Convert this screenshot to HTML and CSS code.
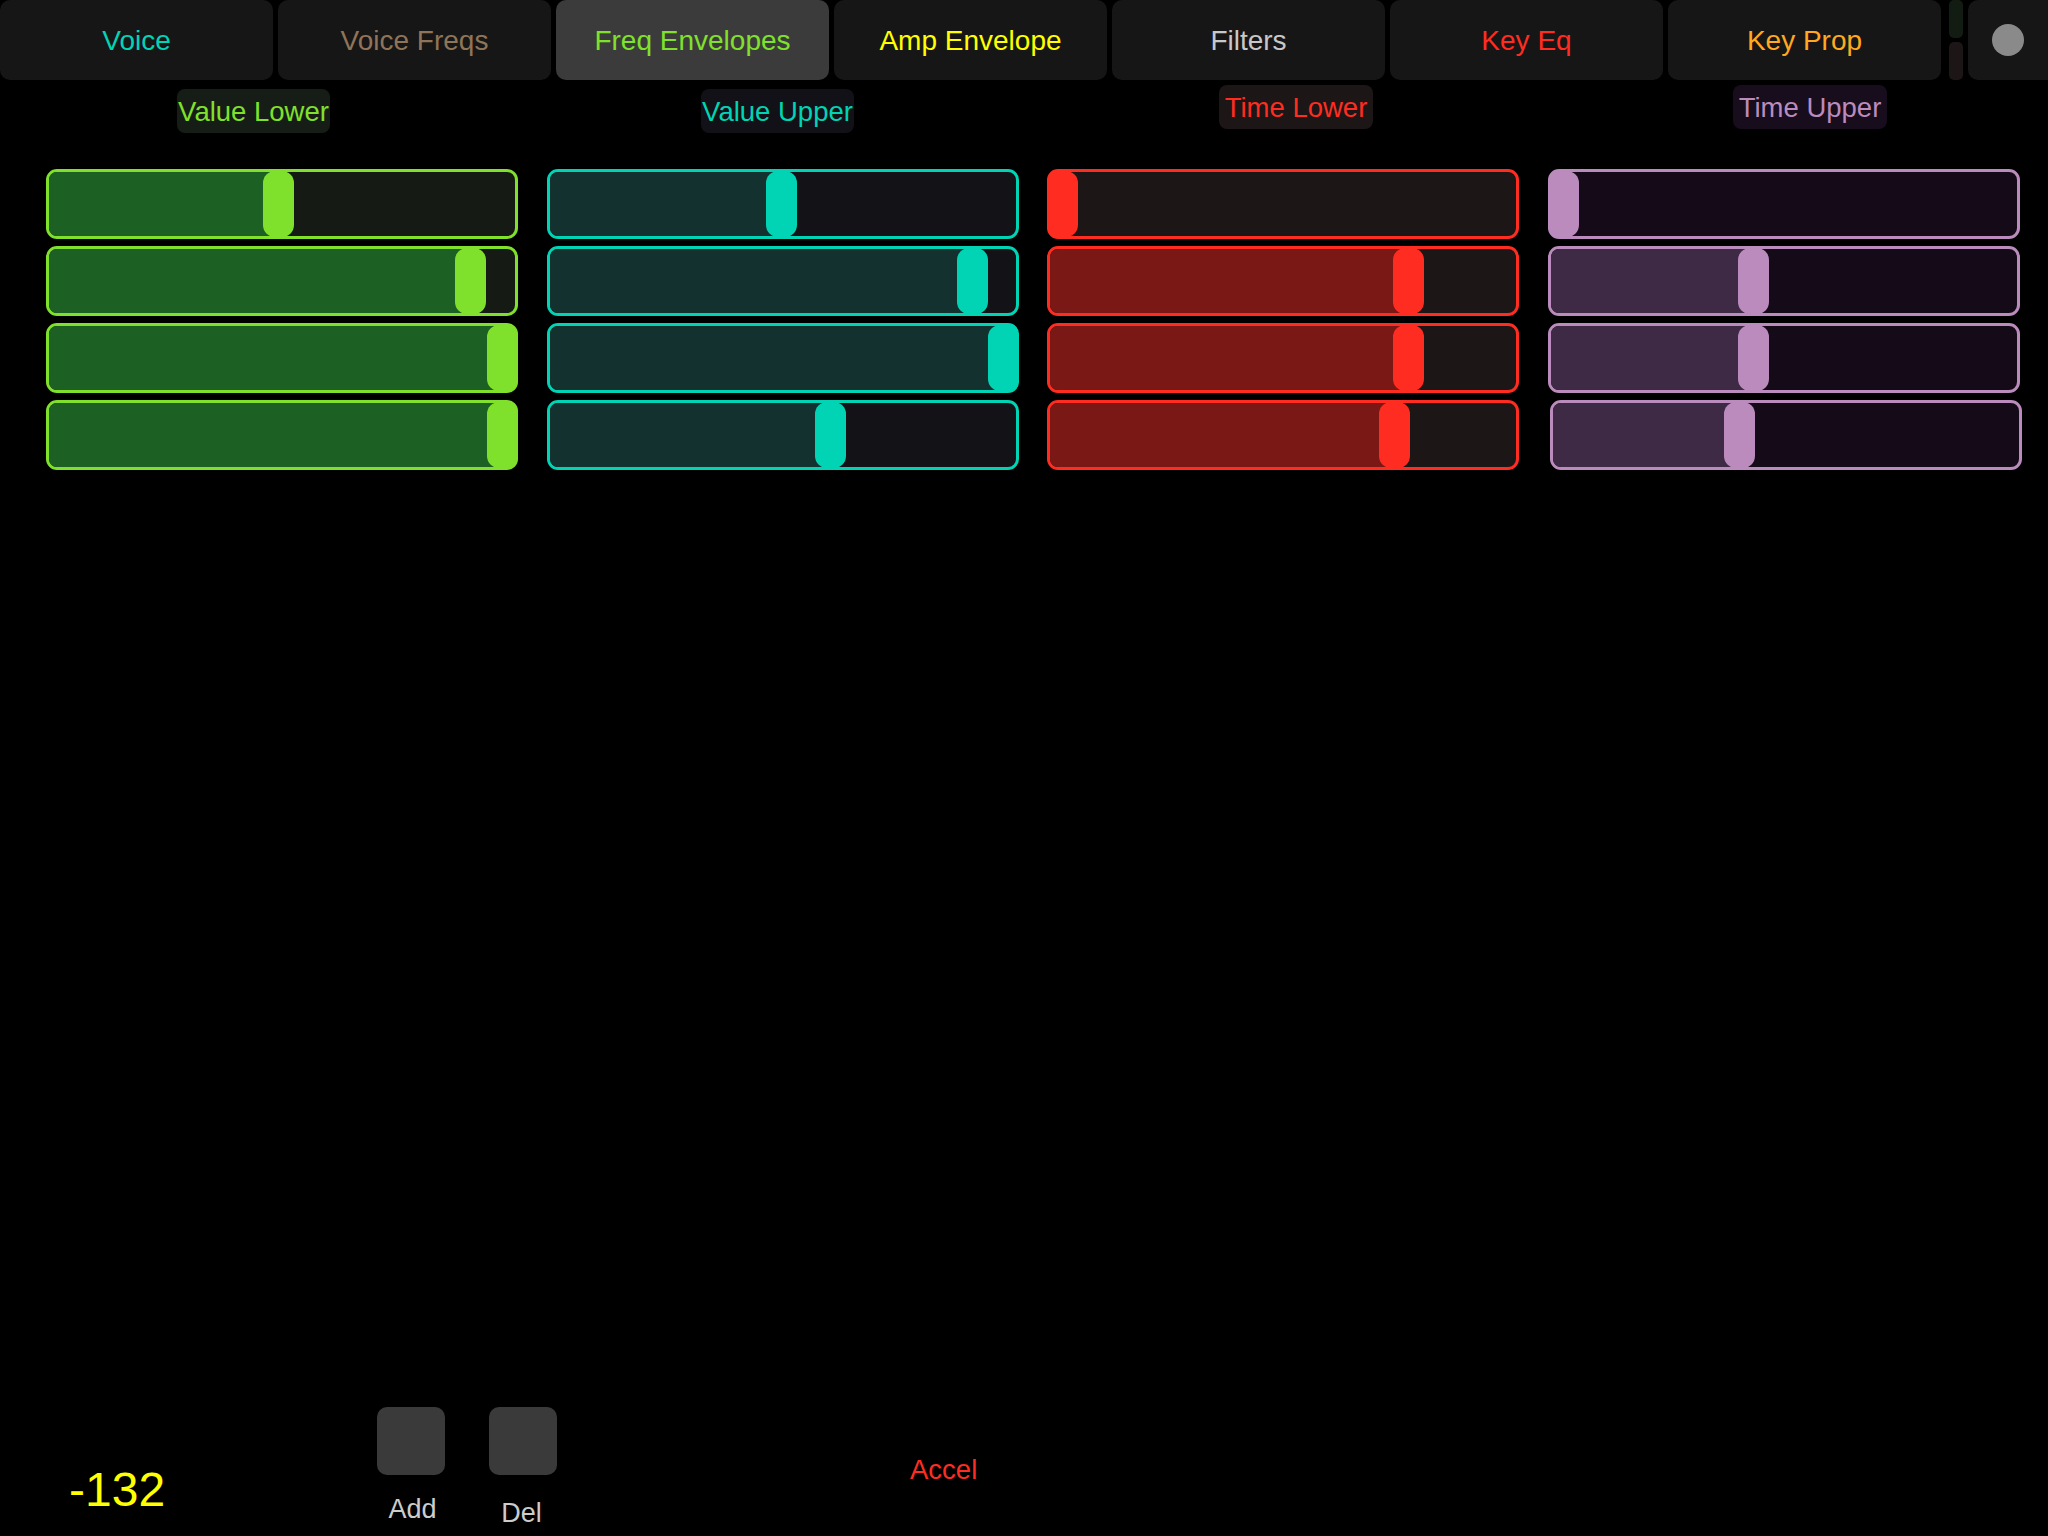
FILE: index.html
```html
<!DOCTYPE html>
<html>
<head>
<meta charset="utf-8">
<link rel="stylesheet" href="styles.css">
</head>
<body>
<div class="page">
  <div class="tabs">
    <div class="tab t-voice">Voice</div>
    <div class="tab t-freqs">Voice Freqs</div>
    <div class="tab t-env active">Freq Envelopes</div>
    <div class="tab t-amp">Amp Envelope</div>
    <div class="tab t-filt">Filters</div>
    <div class="tab t-keyeq">Key Eq</div>
    <div class="tab t-keyprop">Key Prop</div>
    <div class="meter"><div class="m-top"></div><div class="m-bot"></div></div>
    <div class="rec"><div class="dot"></div></div>
  </div>

  <div class="labels">
    <div class="label l1 green">Value Lower</div>
    <div class="label l2 teal">Value Upper</div>
    <div class="label l3 red">Time Lower</div>
    <div class="label l4 lilac">Time Upper</div>
  </div>

  <div class="cols">
    <div class="col green">
      <div class="slider" style="--v:0.492"><div class="fill"></div><div class="thumb"></div></div>
      <div class="slider" style="--v:0.927"><div class="fill"></div><div class="thumb"></div></div>
      <div class="slider" style="--v:1"><div class="fill"></div><div class="thumb"></div></div>
      <div class="slider" style="--v:1"><div class="fill"></div><div class="thumb"></div></div>
    </div>
    <div class="col teal">
      <div class="slider" style="--v:0.497"><div class="fill"></div><div class="thumb"></div></div>
      <div class="slider" style="--v:0.930"><div class="fill"></div><div class="thumb"></div></div>
      <div class="slider" style="--v:1"><div class="fill"></div><div class="thumb"></div></div>
      <div class="slider" style="--v:0.608"><div class="fill"></div><div class="thumb"></div></div>
    </div>
    <div class="col red">
      <div class="slider" style="--v:0"><div class="fill"></div><div class="thumb"></div></div>
      <div class="slider" style="--v:0.785"><div class="fill"></div><div class="thumb"></div></div>
      <div class="slider" style="--v:0.785"><div class="fill"></div><div class="thumb"></div></div>
      <div class="slider" style="--v:0.751"><div class="fill"></div><div class="thumb"></div></div>
    </div>
    <div class="col lilac">
      <div class="slider" style="--v:0"><div class="fill"></div><div class="thumb"></div></div>
      <div class="slider" style="--v:0.431"><div class="fill"></div><div class="thumb"></div></div>
      <div class="slider" style="--v:0.431"><div class="fill"></div><div class="thumb"></div></div>
      <div class="slider shift" style="--v:0.394"><div class="fill"></div><div class="thumb"></div></div>
    </div>
  </div>

  <div class="bottom">
    <div class="readout">-132</div>
    <div class="btn-group g-add">
      <div class="btn"></div>
      <div class="btn-label">Add</div>
    </div>
    <div class="btn-group g-del">
      <div class="btn"></div>
      <div class="btn-label">Del</div>
    </div>
    <div class="accel">Accel</div>
  </div>
</div>
</body>
</html>
```

FILE: styles.css
```css
html, body {
  margin: 0;
  padding: 0;
  background: #000;
}

body {
  font-family: "Liberation Sans", Arial, sans-serif;
}

.page {
  width: 2048px;
  height: 1536px;
  display: flex;
  flex-direction: column;
  overflow: hidden;
}

/* ---------- tabs ---------- */
.tabs {
  display: flex;
  height: 80px;
  gap: 5px;
}

.tab {
  width: 273px;
  height: 80px;
  box-sizing: border-box;
  padding-top: 2px;
  flex: none;
  background: #161616;
  border-radius: 10px;
  font-size: 28px;
  line-height: 78px;
  text-align: center;
}

.tab.active { background: #3b3b3b; }

.t-voice { color: #00d4b4; }
.t-freqs { color: #8f7458; }
.t-env { color: #80e12c; }
.t-amp { color: #ffff00; }
.t-filt { color: #c8c8c8; }
.t-keyeq { color: #ff2d21; }
.t-keyprop { color: #ffa820; }

.meter {
  width: 14px;
  margin-left: 3px;
  display: flex;
  flex-direction: column;
  gap: 4px;
  flex: none;
}

.m-top {
  height: 38px;
  background: #131c13;
  border-radius: 5px;
}

.m-bot {
  height: 38px;
  background: #1c1616;
  border-radius: 5px;
}

.rec {
  width: 80px;
  flex: none;
  background: #161616;
  border-radius: 10px 0 0 10px;
  display: flex;
  align-items: center;
  justify-content: center;
}

.dot {
  width: 32px;
  height: 32px;
  border-radius: 50%;
  background: #8a8a8a;
}

/* ---------- color themes ---------- */
.green { --c: #80e12c; --fill: #1c6024; --bg: #151a15; --pill: #161c16; }
.teal  { --c: #00d4b4; --fill: #13312e; --bg: #121217; --pill: #111117; }
.red   { --c: #ff2d21; --fill: #7a1816; --bg: #1c1616; --pill: #1c1616; }
.lilac { --c: #bb8bbd; --fill: #3e2a44; --bg: #150b18; --pill: #170d1c; }

/* ---------- labels ---------- */
.labels {
  display: flex;
  align-items: flex-start;
  margin-top: 9px;
  height: 44px;
}

.label {
  height: 44px;
  box-sizing: border-box;
  padding-top: 2px;
  line-height: 42px;
  font-size: 27.5px;
  text-align: center;
  white-space: nowrap;
  color: var(--c);
  background: var(--pill);
  border-radius: 8px;
  flex: none;
}

.l1 { width: 153px; margin-left: 177px; }
.l2 { width: 153px; margin-left: 371px; }
.l3 { width: 154px; margin-left: 365px; margin-top: -4px; }
.l4 { width: 154px; margin-left: 360px; margin-top: -4px; }

/* ---------- sliders ---------- */
.cols {
  display: flex;
  gap: 28.67px;
  padding-left: 46px;
  margin-top: 36px;
}

.col {
  width: 472px;
  display: flex;
  flex-direction: column;
  gap: 7px;
}

.slider {
  position: relative;
  height: 70px;
  box-sizing: border-box;
  border: 3px solid var(--c);
  border-radius: 11px;
  background: var(--bg);
}

.slider.shift { margin-left: 2px; margin-right: -2px; }

.fill {
  position: absolute;
  left: 0;
  top: 0;
  bottom: 0;
  width: calc(var(--v) * (100% - 25px) + 12px);
  background: var(--fill);
  border-radius: 8px 0 0 8px;
}

.thumb {
  position: absolute;
  top: -1px;
  bottom: -1px;
  width: 31px;
  left: calc(var(--v) * (100% - 25px) - 3px);
  background: var(--c);
  border-radius: 12px;
}

/* ---------- bottom ---------- */
.bottom {
  margin-top: auto;
  height: 136px;
  display: flex;
  align-items: flex-start;
}

.readout {
  margin-left: 69px;
  margin-top: 66px;
  font-size: 48px;
  line-height: 48px;
  color: #ffff00;
  width: 96px;
  white-space: nowrap;
}

.btn-group {
  width: 68px;
  margin-top: 7px;
  display: flex;
  flex-direction: column;
  align-items: center;
}

.g-add { margin-left: 212px; }
.g-del { margin-left: 44px; }

.btn {
  width: 68px;
  height: 68px;
  background: #3a3a3a;
  border-radius: 10px;
}

.btn-label {
  font-size: 27px;
  line-height: 27px;
  color: #cccccc;
  white-space: nowrap;
}

.g-add .btn-label { margin-top: 21px; margin-left: 3px; }
.g-del .btn-label { margin-top: 25px; margin-left: -3px; }

.accel {
  margin-left: 353px;
  margin-top: 56px;
  font-size: 27.5px;
  line-height: 27.5px;
  color: #ff2d21;
}
```
